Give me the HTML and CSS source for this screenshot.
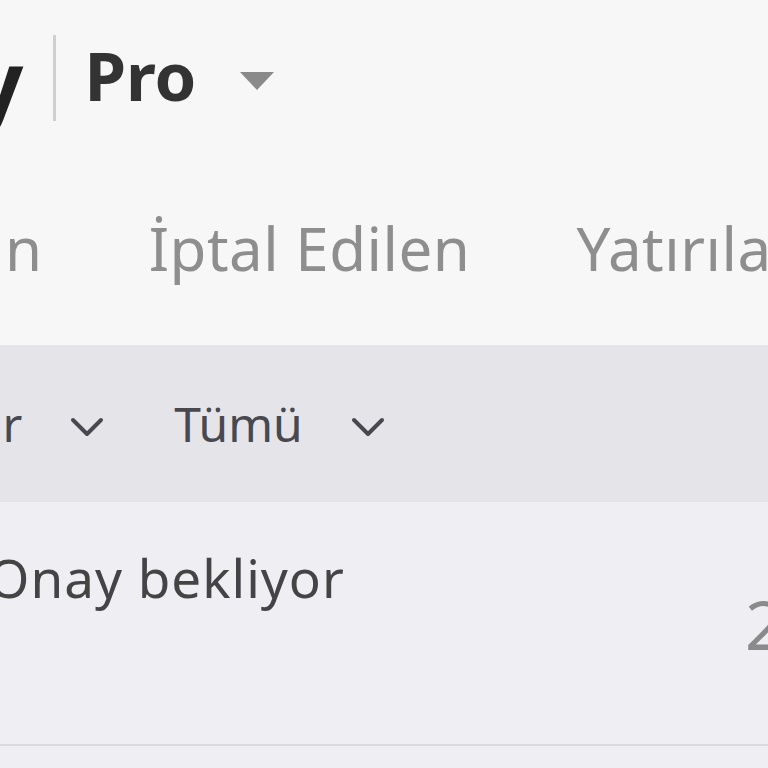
FILE: index.html
```html
<!DOCTYPE html>
<html lang="tr">
<head>
<meta charset="utf-8">
<link rel="stylesheet" href="styles.css">
</head>
<body>
<div class="screen">
  <header class="top">
    <div class="brand">
      <span class="logo">y</span>
      <span class="sep"></span>
      <span class="pro">Pro</span>
      <svg class="caret" width="34" height="18" viewBox="0 0 34 18"><path d="M0 0H34L17 18Z" fill="#8a8a8a"/></svg>
    </div>
    <nav class="tabs">
      <span class="tab first">Onaylanan</span>
      <span class="tab">İptal Edilen</span>
      <span class="tab">Yatırılan</span>
    </nav>
  </header>
  <div class="filters">
    <div class="filter first">
      <span>Durumlar</span>
      <svg class="chev" width="34" height="20" viewBox="0 0 34 20"><path d="M3 3L17 17L31 3" fill="none" stroke="#48484e" stroke-width="4" stroke-linecap="round" stroke-linejoin="round"/></svg>
    </div>
    <div class="filter">
      <span>Tümü</span>
      <svg class="chev" width="34" height="20" viewBox="0 0 34 20"><path d="M3 3L17 17L31 3" fill="none" stroke="#48484e" stroke-width="4" stroke-linecap="round" stroke-linejoin="round"/></svg>
    </div>
  </div>
  <div class="list">
    <div class="item">
      <span class="status">Onay bekliyor</span>
      <span class="amount">2</span>
    </div>
  </div>
</div>
</body>
</html>
```

FILE: styles.css
```css
html, body {
  margin: 0;
  padding: 0;
  background: #efeef3;
}
.screen {
  width: 768px;
  height: 768px;
  overflow: hidden;
  font-family: "Noto Sans", "Open Sans", sans-serif;
  background: #efeef3;
}
.top {
  background: #f7f7f7;
  height: 345px;
  display: flex;
  flex-direction: column;
}
.brand {
  display: flex;
  align-items: center;
  height: 156px;
  white-space: nowrap;
}
.logo {
  font-size: 90px;
  font-weight: 700;
  color: #222;
  margin-left: -28px;
  line-height: 1;
  transform: translateY(2px);
}
.sep {
  width: 3px;
  height: 86px;
  background: #cfcfcf;
  margin-left: 30px;
  margin-right: 30px;
}
.pro {
  font-size: 67px;
  font-weight: 700;
  color: #333;
  line-height: 1;
  margin-left: -2px;
  transform: translateY(-3px);
}
.caret {
  margin-left: 44px;
  margin-top: 6px;
}
.tabs {
  display: flex;
  align-items: center;
  height: 180px;
  white-space: nowrap;
  gap: 106px;
  margin-top: 2px;
}
.tab {
  font-size: 60px;
  color: #8e8e8e;
  line-height: 1;
  letter-spacing: 0.5px;
}
.tab.first {
  margin-left: -267px;
}
.filters {
  background: #e5e4e9;
  height: 157px;
  display: flex;
  align-items: center;
  gap: 70px;
  white-space: nowrap;
}
.filter {
  display: flex;
  align-items: center;
  gap: 48px;
  font-size: 48px;
  color: #48484e;
}
.filter.first {
  margin-left: -196px;
}
.chev {
  margin-top: 6px;
}
.list {
  background: #efeef3;
}
.item {
  height: 242px;
  border-bottom: 2px solid #d9d9de;
  display: flex;
  justify-content: space-between;
  align-items: flex-start;
  white-space: nowrap;
}
.status {
  font-size: 53px;
  color: #444;
  margin-left: -12px;
  margin-top: 49px;
  line-height: 1;
  letter-spacing: 1px;
}
.amount {
  font-size: 68px;
  color: #8a8a8a;
  margin-top: 88px;
  margin-right: -16px;
  line-height: 1;
}
```
